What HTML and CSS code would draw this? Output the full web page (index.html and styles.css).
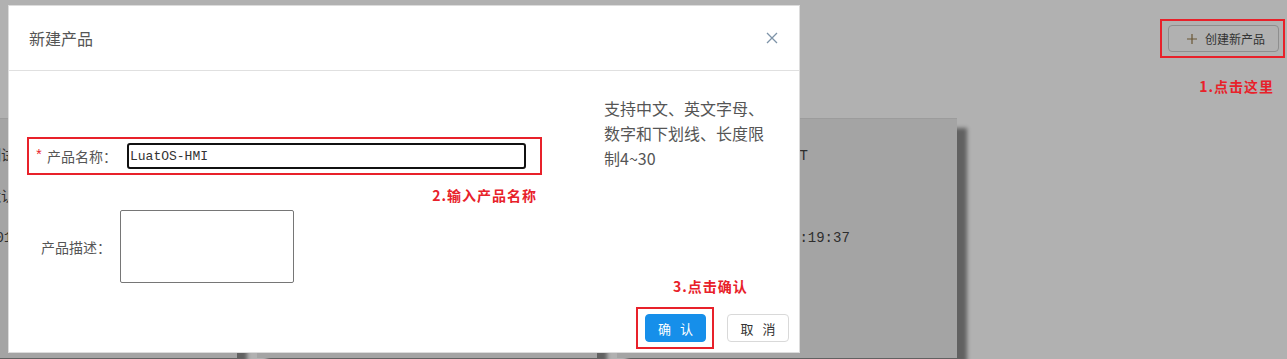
FILE: index.html
```html
<!DOCTYPE html>
<html lang="zh-CN">
<head>
    <meta charset="UTF-8">
    <meta name="viewport" content="width=device-width, initial-scale=1.0">
    <title>新建产品</title>
    <link rel="stylesheet" href="styles.css">
</head>
<body>
    <div class="topbar">
        <div class="mark mark-create">
            <button class="btn-create">
                <svg class="plus" width="10" height="10" viewBox="0 0 10 10"><path d="M5 0v10M0 5h10" stroke="#6a5634" stroke-width="1.2"/></svg>
                创建新产品
            </button>
        </div>
    </div>
    <div class="note note-1">1.点击这里</div>

    <div class="cards">
        <div class="card">
            <div>产品描述：测试设备列表</div>
            <div>设备类型：默认设备分组</div>
            <div>创建时间：2010-01-01 10:19:37</div>
        </div>
        <div class="card">
            <div>产品名称：LuatOS-HMI</div>
            <div>产品描述：</div>
            <div>创建时间：23-03-08 10:19:37</div>
        </div>
        <div class="card">
            <div>产品名称：Air780E-TEST</div>
            <div>产品描述：</div>
            <div>创建时间：23-03-08 10:19:37</div>
        </div>
    </div>

    <div class="modal">
        <div class="modal-header">
            <span class="modal-title">新建产品</span>
            <svg class="close" width="12" height="12" viewBox="0 0 12 12"><path d="M1 1l10 10M11 1L1 11" stroke="#7d93a8" stroke-width="1.3"/></svg>
        </div>
        <div class="modal-body">
            <div class="form">
                <div class="mark mark-name">
                    <span class="required">*</span>
                    <label class="label">产品名称：</label>
                    <input class="input" type="text" value="LuatOS-HMI">
                </div>
                <div class="note note-2">2.输入产品名称</div>
                <div class="field">
                    <label class="label">产品描述：</label>
                    <textarea class="textarea"></textarea>
                </div>
            </div>
            <div class="hint">支持中文、英文字母、数字和下划线、长度限制4~30</div>
        </div>
        <div class="modal-footer">
            <div class="confirm-group">
                <div class="note note-3">3.点击确认</div>
                <div class="mark mark-ok">
                    <button class="btn btn-primary">确认</button>
                </div>
            </div>
            <button class="btn btn-default">取消</button>
        </div>
    </div>
</body>
</html>
```

FILE: styles.css
```css
body {
    margin: 0;
    background: #b1b1b1;
    font-family: "Noto Sans CJK SC", sans-serif;
    overflow: hidden;
    position: relative;
    height: 359px;
}

.mark {
    border: 2px solid #e8212a;
}

.note {
    color: #e8212a;
    font-weight: bold;
    font-size: 14px;
    line-height: 14px;
    letter-spacing: 1px;
    white-space: nowrap;
}

/* top right */
.topbar {
    display: flex;
    justify-content: flex-end;
    padding: 19px 2px 0 0;
}

.mark-create {
    padding: 4px 4px 4px 6px;
}

.btn-create {
    display: flex;
    align-items: center;
    gap: 8px;
    height: 27px;
    width: 111px;
    padding: 0 0 0 18px;
    background: #b1b1b1;
    border: 1px solid #8e8e8e;
    border-radius: 4px;
    font-family: "Noto Sans CJK SC", sans-serif;
    font-size: 12px;
    color: #333;
}

.note-1 {
    text-align: right;
    margin: 21px 13px 0 0;
}

/* background cards */
.cards {
    display: flex;
    gap: 20px;
    margin: 25px 0 0 -103px;
}

.card {
    flex: 0 0 340px;
    height: 240px;
    box-sizing: border-box;
    padding: 17px 20px;
    background: #a4a4a4;
    border-top: 1px solid #9c9c9c;
    box-shadow: 10px 10px 4px rgba(0, 0, 0, 0.45);
    font-family: "Liberation Mono", "Noto Sans CJK SC", monospace;
    font-size: 14px;
    line-height: 41px;
    color: #2e2e2e;
    white-space: nowrap;
    overflow: hidden;
}

/* modal */
.modal {
    position: absolute;
    left: 8px;
    top: 5px;
    width: 792px;
    height: 348px;
    box-sizing: border-box;
    background: #fff;
    border: 1px solid #dcdcdc;
}

.modal-header {
    height: 64px;
    display: flex;
    align-items: center;
    justify-content: space-between;
    padding: 0 21px 0 20px;
    border-bottom: 1px solid #e0e0e0;
}

.modal-title {
    font-size: 16px;
    color: #555;
}

.modal-body {
    height: 208px;
    display: flex;
}

.form {
    padding: 66px 0 0 18px;
    width: 515px;
}

.mark-name {
    display: flex;
    align-items: center;
    padding: 4px 14px 4px 2px;
}

.required {
    color: #e8212a;
    font-family: "Liberation Mono", monospace;
    font-size: 14px;
    width: 16px;
    text-align: center;
}

.label {
    font-size: 14px;
    color: #555;
    white-space: nowrap;
}

.input {
    margin-left: 10px;
    width: 399px;
    height: 26px;
    box-sizing: border-box;
    border: 2px solid #111;
    border-radius: 3px;
    padding: 0 0 0 1px;
    font-family: "Liberation Mono", monospace;
    font-size: 13px;
    color: #333;
    outline: none;
}

.note-2 {
    text-align: right;
    margin: 13px 5px 0 0;
}

.field {
    display: flex;
    align-items: center;
    margin: 8px 0 0 14px;
}

.textarea {
    margin-left: 9px;
    width: 174px;
    height: 73px;
    box-sizing: border-box;
    border: 1px solid #767676;
    border-radius: 2px;
    resize: none;
}

.hint {
    margin: 25px 0 0 62px;
    width: 170px;
    font-size: 16px;
    line-height: 25px;
    color: #555;
}

.modal-footer {
    display: flex;
    justify-content: flex-end;
    align-items: flex-end;
    gap: 13px;
    padding: 0 10px 3px 0;
}

.confirm-group {
    display: flex;
    flex-direction: column;
    width: 78px;
}

.note-3 {
    margin: 0 0 14px 37px;
}

.mark-ok {
    padding: 5px 6px 5px 7px;
}

.btn {
    height: 28px;
    width: 62px;
    border-radius: 4px;
    font-family: "Noto Sans CJK SC", sans-serif;
    font-size: 13px;
    letter-spacing: 9px;
    padding: 0 0 0 9px;
}

.btn-primary {
    background: #168fea;
    border: 1px solid #168fea;
    color: #fff;
    width: 61px;
}

.btn-default {
    background: #fff;
    border: 1px solid #d9d9d9;
    color: #333;
    margin-bottom: 7px;
}
```
